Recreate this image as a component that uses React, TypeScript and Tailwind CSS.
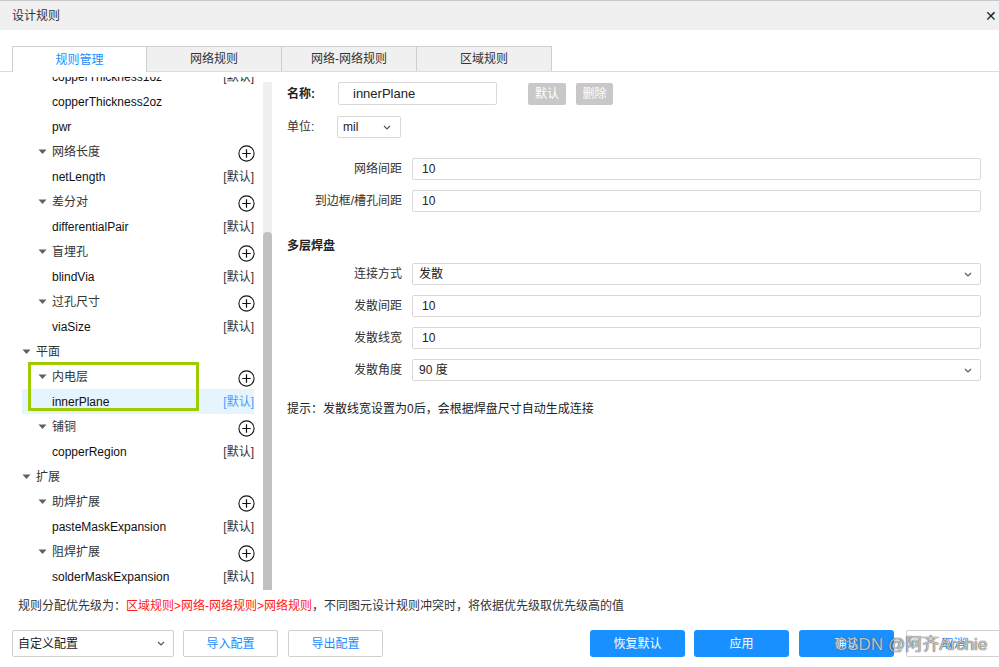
import React from 'react';

type Row =
    | { kind: 'group1'; label: string }
    | { kind: 'group2'; label: string; add?: boolean }
    | { kind: 'leaf'; label: string; tag?: boolean; active?: boolean };

const rows: Row[] = [
    { kind: 'leaf', label: 'copperThickness1oz', tag: true },
    { kind: 'leaf', label: 'copperThickness2oz' },
    { kind: 'leaf', label: 'pwr' },
    { kind: 'group2', label: '网络长度', add: true },
    { kind: 'leaf', label: 'netLength', tag: true },
    { kind: 'group2', label: '差分对', add: true },
    { kind: 'leaf', label: 'differentialPair', tag: true },
    { kind: 'group2', label: '盲埋孔', add: true },
    { kind: 'leaf', label: 'blindVia', tag: true },
    { kind: 'group2', label: '过孔尺寸', add: true },
    { kind: 'leaf', label: 'viaSize', tag: true },
    { kind: 'group1', label: '平面' },
    { kind: 'group2', label: '内电层', add: true },
    { kind: 'leaf', label: 'innerPlane', tag: true, active: true },
    { kind: 'group2', label: '铺铜', add: true },
    { kind: 'leaf', label: 'copperRegion', tag: true },
    { kind: 'group1', label: '扩展' },
    { kind: 'group2', label: '助焊扩展', add: true },
    { kind: 'leaf', label: 'pasteMaskExpansion', tag: true },
    { kind: 'group2', label: '阻焊扩展', add: true },
    { kind: 'leaf', label: 'solderMaskExpansion', tag: true },
];

const Caret = () => (
    <svg width="9" height="6" viewBox="0 0 9 6" className="shrink-0">
        <path d="M0.5 0.5 L8.5 0.5 L4.5 5 Z" fill="#606060" />
    </svg>
);

const Plus = () => (
    <svg width="17" height="17" viewBox="0 0 17 17" className="shrink-0">
        <circle cx="8.5" cy="8.5" r="7.6" fill="none" stroke="#111" strokeWidth="1.1" />
        <path d="M4.3 8.5 H12.7 M8.5 4.3 V12.7" stroke="#111" strokeWidth="1.2" />
    </svg>
);

const Chevron = () => (
    <svg width="8" height="5" viewBox="0 0 8 5" className="shrink-0">
        <path d="M1 1 L4 4 L7 1" fill="none" stroke="#555" strokeWidth="1.1" />
    </svg>
);

function TreeRow({ row }: { row: Row }) {
    if (row.kind === 'group1') {
        return (
            <div className="h-[25px] ml-[10px] mr-[9px] flex items-center gap-[5px] text-[#333]">
                <Caret />
                <span>{row.label}</span>
            </div>
        );
    }
    if (row.kind === 'group2') {
        return (
            <div className="h-[25px] ml-[10px] mr-[9px] pl-[16px] flex items-center gap-[5px] text-[#333]">
                <Caret />
                <span className="flex-1">{row.label}</span>
                {row.add && (
                    <span className="mt-[3px] mr-[-1px]">
                        <Plus />
                    </span>
                )}
            </div>
        );
    }
    return (
        <div className={`h-[25px] ml-[10px] mr-[9px] pl-[30px] flex items-center ${row.active ? 'bg-[#e5f4fd]' : ''}`}>
            <span className="flex-1 text-[#111]">{row.label}</span>
            {row.tag && <span className={row.active ? 'text-[#4d9cff]' : 'text-[#333]'}>[默认]</span>}
        </div>
    );
}

function Field({ label, value, select }: { label: string; value: string; select?: boolean }) {
    return (
        <div className="flex items-center h-[22px]">
            <span className="w-[115px] text-right text-[#333]">{label}</span>
            <div className={`ml-[10px] flex-1 h-[22px] border border-[#d9d9d9] rounded-[2px] flex items-center ${select ? 'pl-[6px] pr-[8px]' : 'pl-[9px]'}`}>
                <span className="flex-1 text-[#222]">{value}</span>
                {select && <Chevron />}
            </div>
        </div>
    );
}

export default function App() {
    return (
        <div className="relative w-[999px] h-[667px] overflow-hidden bg-white text-[12px] font-['Liberation_Sans','Noto_Sans_CJK_SC',sans-serif]">
            {/* title bar */}
            <div className="h-[30px] border-t border-[#c8c8c8] bg-[#f0f0f0] flex items-center justify-between pl-[12px] pr-[2px]">
                <span className="text-[#333]">设计规则</span>
                <span className="text-[14px] text-[#222] leading-none">✕</span>
            </div>

            {/* tabs */}
            <div className="mt-[16px] pl-[12px] flex border-b border-[#dcdcdc]">
                <div className="w-[135px] h-[26px] flex items-center justify-center bg-white border-x border-t border-[#cfcfcf] -mb-px text-[#1a8cff]">规则管理</div>
                {['网络规则', '网络-网络规则', '区域规则'].map((t) => (
                    <div key={t} className="w-[135px] h-[25px] flex items-center justify-center bg-[#f0f0f0] border-r border-t border-[#cfcfcf] text-[#333]">
                        {t}
                    </div>
                ))}
            </div>

            {/* main */}
            <div className="flex h-[518px]">
                <div className="ml-[12px] w-[260px] flex">
                    <div className="relative mt-[5px] w-[251px] overflow-hidden">
                        <div className="mt-[-13px]">
                            {rows.map((r, i) => (
                                <TreeRow key={i} row={r} />
                            ))}
                        </div>
                        <div className="absolute left-[16px] top-[285px] w-[171px] h-[49px] border-[3px] border-[#9fcc00]" />
                    </div>
                    <div className="mt-[10px] w-[9px] bg-[#f0f0f0] flex flex-col justify-end">
                        <div className="h-[358px] bg-[#c1c1c1] rounded-t-[4px]" />
                    </div>
                </div>

                <div className="flex-1 pl-[15px] pr-[18px] pt-[10px] flex flex-col">
                    <div className="flex items-center h-[23px]">
                        <span className="w-[51px] font-bold text-[#222]">名称:</span>
                        <div className="w-[159px] h-[23px] border border-[#d9d9d9] rounded-[2px] flex items-center pl-[14px] text-[13px] text-[#222]">innerPlane</div>
                        <div className="ml-[31px] w-[38px] h-[22px] bg-[#c8c8c8] rounded-[2px] text-white flex items-center justify-center">默认</div>
                        <div className="ml-[10px] w-[37px] h-[22px] bg-[#c8c8c8] rounded-[2px] text-white flex items-center justify-center">删除</div>
                    </div>
                    <div className="mt-[11px] flex items-center h-[22px]">
                        <span className="w-[50px] text-[#333]">单位:</span>
                        <div className="w-[64px] h-[22px] border border-[#d9d9d9] rounded-[2px] flex items-center pl-[5px] pr-[9px]">
                            <span className="flex-1 text-[#222]">mil</span>
                            <Chevron />
                        </div>
                    </div>

                    <div className="mt-[20px] flex flex-col gap-[10px]">
                        <Field label="网络间距" value="10" />
                        <Field label="到边框/槽孔间距" value="10" />
                    </div>

                    <div className="mt-[26px] h-[16px] flex items-center font-bold text-[#222]">多层焊盘</div>

                    <div className="mt-[9px] flex flex-col gap-[10px]">
                        <Field label="连接方式" value="发散" select />
                        <Field label="发散间距" value="10" />
                        <Field label="发散线宽" value="10" />
                        <Field label="发散角度" value="90 度" select />
                    </div>

                    <div className="mt-[20px] h-[16px] flex items-center text-[#222]">提示：发散线宽设置为0后，会根据焊盘尺寸自动生成连接</div>
                </div>
            </div>

            {/* priority */}
            <div className="mt-[6px] h-[20px] pl-[18px] flex items-center text-[#333]">
                <span>规则分配优先级为：</span>
                <span className="text-[#ff1a1a]">区域规则&gt;网络-网络规则&gt;网络规则</span>
                <span>，不同图元设计规则冲突时，将依据优先级取优先级高的值</span>
            </div>

            {/* bottom bar */}
            <div className="mt-[14px] h-[27px] pl-[12px] flex items-stretch">
                <div className="w-[162px] shrink-0 border border-[#d0d0d0] rounded-[2px] flex items-center pl-[5px] pr-[8px] text-[#222]">
                    <span className="flex-1">自定义配置</span>
                    <Chevron />
                </div>
                <div className="ml-[9px] w-[95px] shrink-0 border border-[#d0d0d0] rounded-[2px] flex items-center justify-center text-[#1a8cff]">导入配置</div>
                <div className="ml-[10px] w-[95px] shrink-0 border border-[#d0d0d0] rounded-[2px] flex items-center justify-center text-[#1a8cff]">导出配置</div>
                <div className="ml-[207px] w-[95px] shrink-0 bg-[#1890ff] rounded-[3px] text-white flex items-center justify-center">恢复默认</div>
                <div className="ml-[9px] w-[95px] shrink-0 bg-[#1890ff] rounded-[3px] text-white flex items-center justify-center">应用</div>
                <div className="ml-[10px] w-[95px] shrink-0 bg-[#1890ff] rounded-[3px] text-white flex items-center justify-center">确认</div>
                <div className="ml-[12px] w-[95px] shrink-0 border border-[#d0d0d0] rounded-[2px] bg-white flex items-center justify-center text-[#1a8cff]">取消</div>
            </div>

            {/* watermark */}
            <div className="absolute left-[835px] top-[633px] whitespace-nowrap text-[17px] leading-[24px] text-white/70 [text-shadow:0_0_1px_#444,0_0_1px_#444]">
                CSDN @阿齐Archie
            </div>
        </div>
    );
}
